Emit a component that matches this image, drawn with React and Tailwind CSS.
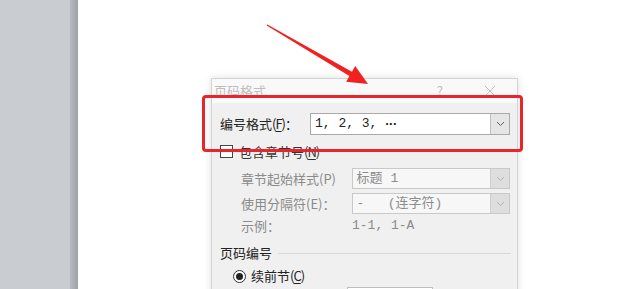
import React from 'react';

const font = { fontFamily: '"Noto Sans CJK SC", "Noto Sans", sans-serif' };

const Chevron = ({ color }) => (
  <svg width="9" height="6" viewBox="0 0 9 6">
    <polyline points="1,1 4.5,4.5 8,1" fill="none" stroke={color} strokeWidth="1" />
  </svg>
);

const Combo = ({ children, disabled, className }) => (
  <div
    className={`flex h-full border ${disabled ? 'border-[#c9c9c9] bg-[#f7f7f7] text-[#8c8c8c]' : 'border-[#a9a9a9] bg-white text-[#222]'} ${className}`}
  >
    <div className="flex-1 flex items-center pl-[4px] text-[13px] font-['Liberation_Mono','Noto_Sans_CJK_SC',monospace] whitespace-pre">
      {children}
    </div>
    <div
      className={`w-[19px] flex items-center justify-center border-l ${disabled ? 'border-[#cfcfcf] bg-[#dedede]' : 'border-[#bdbdbd] bg-[#e5e5e5]'}`}
    >
      <Chevron color={disabled ? '#b5b5b5' : '#606060'} />
    </div>
  </div>
);

const Key = ({ k }) => (
  <span className="tracking-[-1px]">
    (<span className="underline underline-offset-2">{k}</span>)
  </span>
);

export default function App() {
  return (
    <div className="relative w-[620px] h-[289px] overflow-hidden bg-white flex" style={font}>
      {/* grey margin of the document view */}
      <div className="flex shrink-0">
        <div className="w-[70px] bg-[#c9ccd0]" />
        <div className="w-[8px] bg-linear-to-r from-[#b7babe] to-[#9ea2a6]" />
      </div>

      {/* dialog */}
      <div className="ml-[133px] mt-[78px] w-[307px] h-[230px] shrink-0 border border-[#d4d4d4] bg-[#f0f0f0] shadow-[0_0_8px_rgba(0,0,0,0.12)] flex flex-col">
        <div className="h-[24px] bg-[#f9f9f9] flex items-center text-[13px] text-[#bdbdbd]">
          <span className="ml-[2px]">页码格式</span>
          <span className="ml-auto mr-[41px]">?</span>
          <svg width="12" height="12" viewBox="0 0 12 12" className="mr-[21px]">
            <path d="M1 1 L11 11 M11 1 L1 11" stroke="#bdbdbd" strokeWidth="1" />
          </svg>
        </div>

        <div className="pl-[8px] pr-[7px] flex flex-col text-[13px]">
          <div className="mt-[10px] h-[22px] flex items-center text-[#222]">
            <span className="w-[90px]">
              编号格式<Key k="F" />：
            </span>
            <Combo className="w-[200px]">
              1, 2, 3, <span className="font-['Liberation_Sans',sans-serif] font-bold tracking-[-0.5px]">···</span>
            </Combo>
          </div>

          <div className="mt-[10px] h-[13px] flex items-center text-[#333]">
            <div className="w-[13px] h-[13px] border border-[#444] bg-white" />
            <span className="ml-[6px]">
              包含章节号<Key k="N" />
            </span>
          </div>

          <div className="mt-[10px] h-[21px] flex items-center text-[#8a8a8a] pl-[21px]">
            <span className="w-[111px]">章节起始样式(P)</span>
            <Combo disabled className="w-[159px]">标题 1</Combo>
          </div>

          <div className="mt-[4px] h-[21px] flex items-center text-[#8a8a8a] pl-[21px]">
            <span className="w-[111px]">使用分隔符(E)：</span>
            <Combo disabled className="w-[159px]">{'-   (连字符)'}</Combo>
          </div>

          <div className="mt-[5px] h-[14px] flex items-center text-[#8a8a8a] pl-[21px]">
            <span className="w-[111px]">示例：</span>
            <span className="font-['Liberation_Mono','Noto_Sans_CJK_SC',monospace] whitespace-pre">1-1, 1-A</span>
          </div>

          <div className="mt-[12px] h-[16px] flex items-center text-[#222]">
            <span>页码编号</span>
            <div className="flex-1 ml-[6px] mr-[-1px] border-t border-[#d8d8d8]" />
          </div>

          <div className="mt-[8px] h-[14px] flex items-center text-[#222] pl-[13px]">
            <div className="w-[13px] h-[13px] rounded-full border border-[#333] bg-white flex items-center justify-center">
              <div className="w-[7px] h-[7px] rounded-full bg-[#222]" />
            </div>
            <span className="ml-[5px]">
              续前节<Key k="C" />
            </span>
          </div>

          <div className="mt-[4px] ml-[127px] w-[86px] h-[20px] border border-[#bdbdbd] bg-white" />
        </div>
      </div>

      {/* annotation: red frame */}
      <div className="absolute left-[202px] top-[95px] w-[321px] h-[57px] border-[3px] border-[#e8252a] rounded-[4px]" />

      {/* annotation: red arrow */}
      <svg className="absolute left-0 top-0" width="620" height="289" viewBox="0 0 620 289">
        <polygon
          points="267.3,24.6 352,71.7 355.2,66.1 368,84 346.2,81.7 349.4,76.1 266.7,25.4"
          fill="#f0211f"
        />
      </svg>
    </div>
  );
}
